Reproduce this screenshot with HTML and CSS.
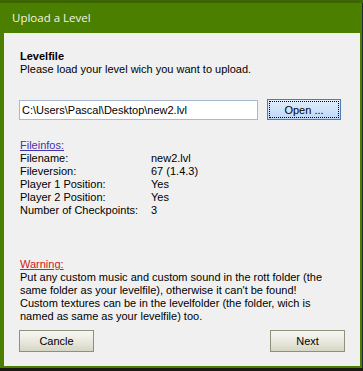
FILE: index.html
```html
<!DOCTYPE html>
<html lang="en">
<head>
  <meta charset="utf-8">
  <title>Upload a Level</title>
  <link rel="stylesheet" href="styles.css">
</head>
<body>
  <div class="top-strip"></div>

  <div class="screen-row">
    <div class="window">
      <div class="title-bar">Upload a Level</div>

      <div class="client">
        <div class="heading">Levelfile</div>
        <div class="line">Please load your level wich you want to upload.</div>

        <div class="file-row">
          <input class="file-box" type="text" value="C:\Users\Pascal\Desktop\new2.lvl">
          <button class="open-btn">Open ...</button>
        </div>

        <div class="info">
          <div class="line section-link">Fileinfos:</div>
          <div class="info-row"><span class="info-label">Filename:</span><span>new2.lvl</span></div>
          <div class="info-row"><span class="info-label">Fileversion:</span><span>67 (1.4.3)</span></div>
          <div class="info-row"><span class="info-label">Player 1 Position:</span><span>Yes</span></div>
          <div class="info-row"><span class="info-label">Player 2 Position:</span><span>Yes</span></div>
          <div class="info-row"><span class="info-label">Number of Checkpoints:</span><span>3</span></div>
        </div>

        <div class="warning">
          <div class="line warning-title">Warning:</div>
          <p class="warning-text">
            Put any custom music and custom sound in the rott folder (the<br>
            same folder as your levelfile), otherwise it can't be found!<br>
            Custom textures can be in the levelfolder (the folder, wich is<br>
            named as same as your levelfile) too.
          </p>
        </div>

        <div class="button-row">
          <button class="dlg-btn">Cancle</button>
          <button class="dlg-btn">Next</button>
        </div>
      </div>
    </div>

    <div class="side"></div>
  </div>

  <div class="bottom-strip"></div>
</body>
</html>
```

FILE: styles.css
```css
body {
  margin: 0;
  background: #1d2633;
  font-family: "Liberation Sans", Arial, sans-serif;
  font-size: 11px;
  color: #000;
  overflow: hidden;
}
.top-strip {
  height: 3px;
  background: #3b6500;
}
.screen-row {
  display: flex;
}
.window {
  width: 356px;
  background: #4a7f00;
  padding: 0 2px 2px 4px;
}
.title-bar {
  height: 30px;
  line-height: 30px;
  padding-left: 8px;
  font-family: "Open Sans", sans-serif;
  font-size: 11.5px;
  color: #f4f4ea;
}
.side {
  flex: 1;
  background: #1e2839;
}
.bottom-strip {
  height: 3px;
  background: #1a1a12;
}

/* dialog body */
.client {
  height: 333px;
  background: #f0f0f0;
  padding: 17px 15px 0 15px;
  box-sizing: border-box;
}
.line,
.heading {
  line-height: 13px;
  padding-left: 1px;
}
.heading {
  font-weight: bold;
}
.file-row {
  display: flex;
  align-items: flex-start;
  margin-top: 23px;
}
.file-box {
  width: 239px;
  height: 20px;
  margin: 1px 0 0 0;
  padding: 0 2px;
  box-sizing: border-box;
  border: 1px solid #a7b9d2;
  background: #fff;
  font-family: inherit;
  font-size: 11px;
  color: #000;
}
.open-btn {
  width: 74px;
  height: 21px;
  margin-left: 9px;
  padding: 0;
  border: 1px solid #4f7db6;
  background: linear-gradient(#e3effc, #cfe3fa 50%, #bcd7f7);
  outline: 1px dotted #000;
  outline-offset: -3px;
  font-family: inherit;
  font-size: 11px;
  color: #000;
}
.info {
  margin-top: 19px;
}
.section-link {
  color: #4432b0;
  text-decoration: underline;
}
.info-row {
  display: flex;
  line-height: 13px;
  padding-left: 1px;
}
.info-label {
  width: 131px;
}
.warning {
  margin-top: 41px;
}
.warning-title {
  color: #cc2020;
  text-decoration: underline;
}
.warning-text {
  margin: 0;
  padding-left: 1px;
  line-height: 13px;
}
.button-row {
  display: flex;
  justify-content: space-between;
  margin-top: 7px;
}
.dlg-btn {
  width: 75px;
  height: 22px;
  padding: 0;
  border: 1px solid #8f907c;
  background: linear-gradient(#f7f7f3, #e9e9df 50%, #d6d6c4);
  font-family: inherit;
  font-size: 11px;
  color: #000;
}
```
